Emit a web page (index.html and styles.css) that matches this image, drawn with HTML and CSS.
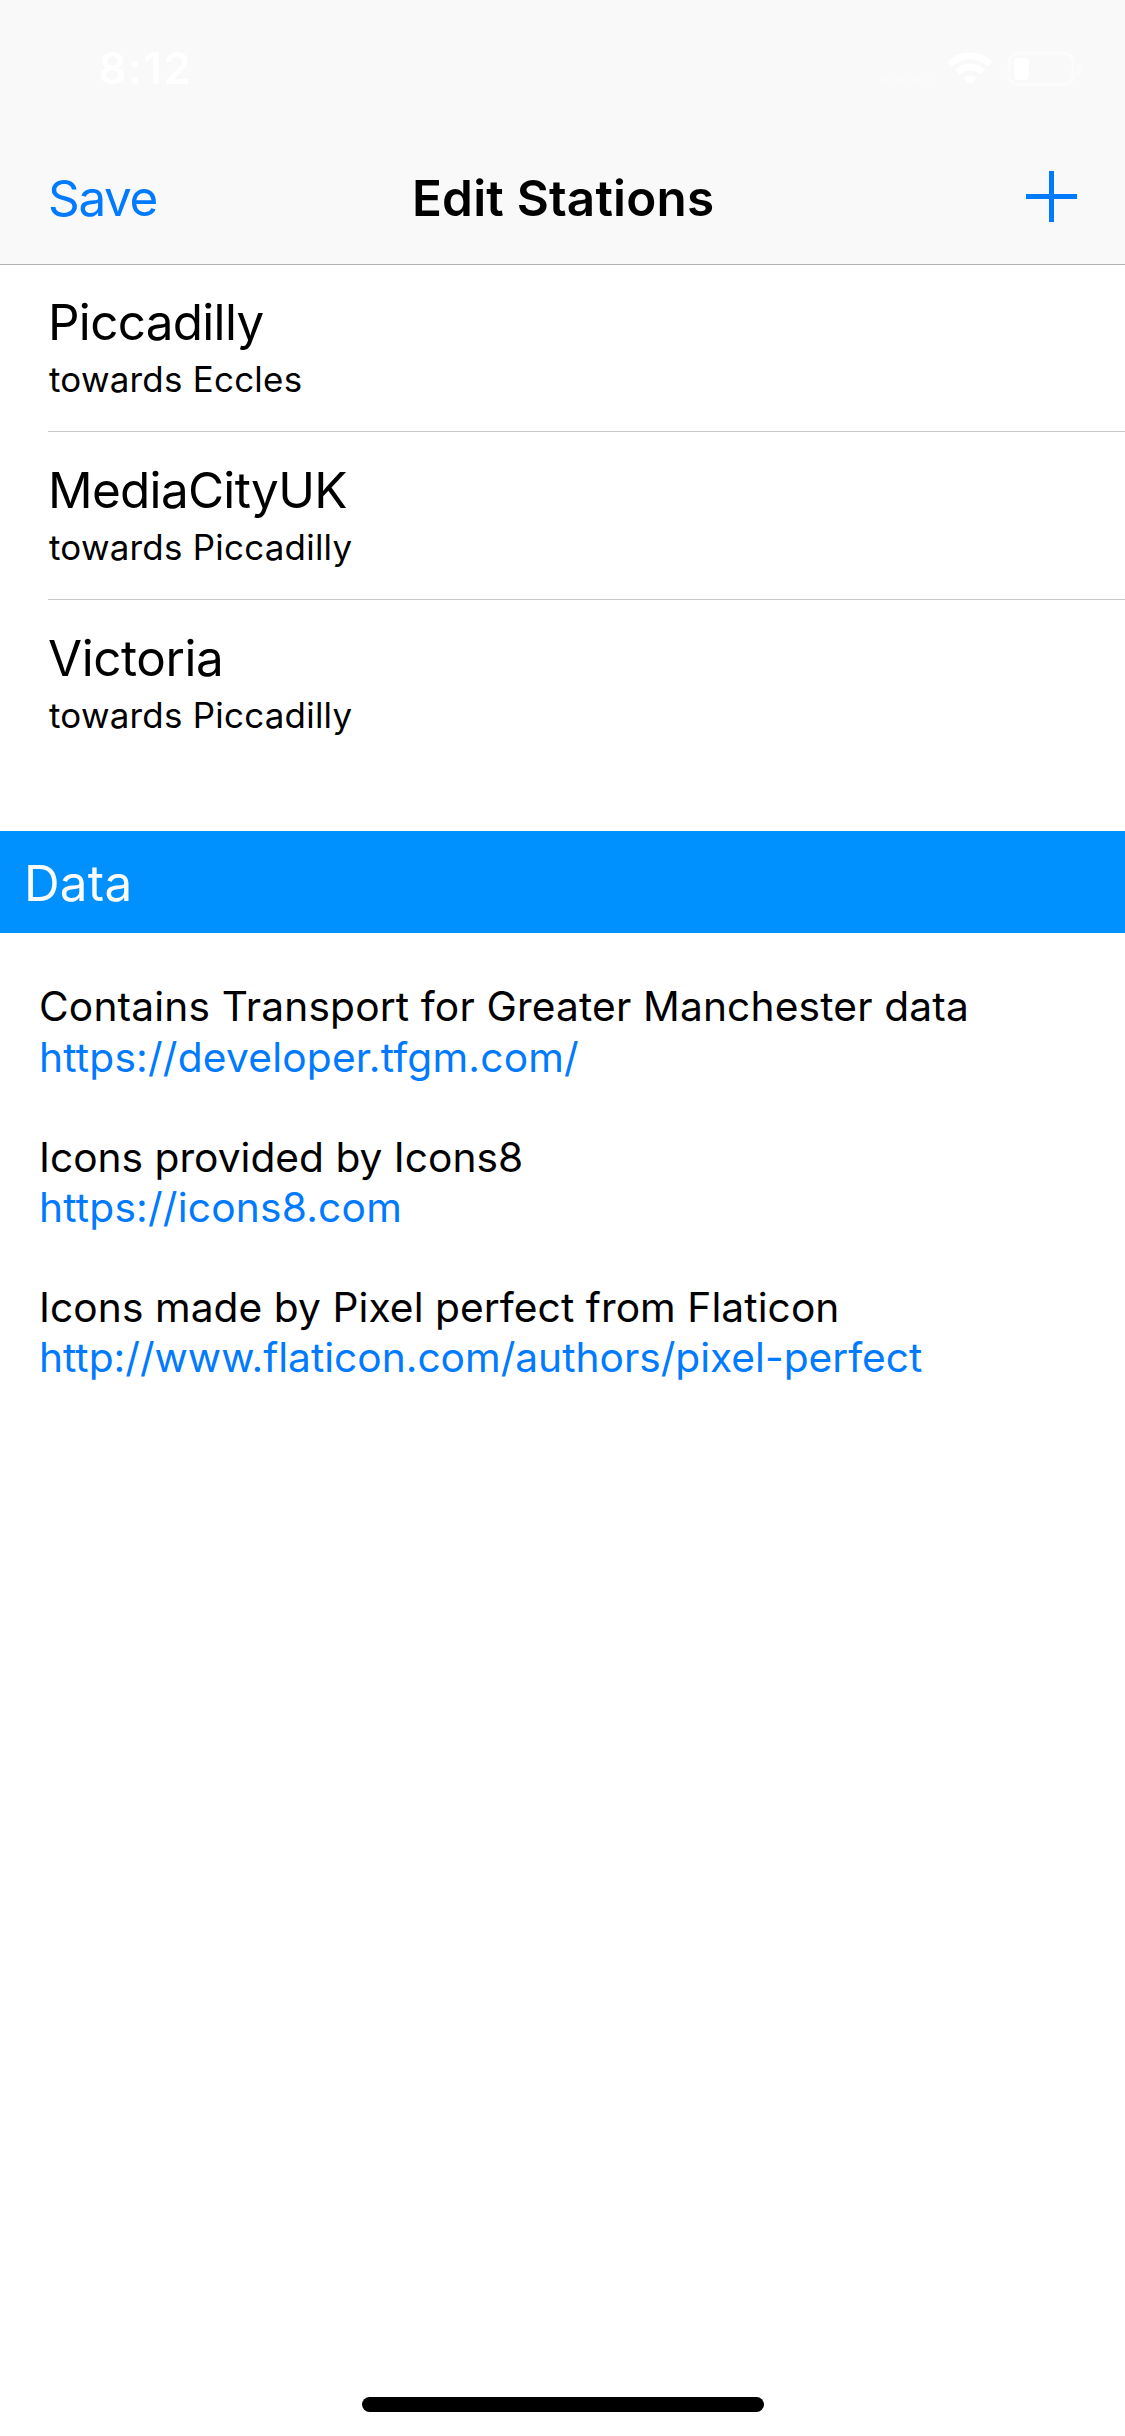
FILE: index.html
```html
<!DOCTYPE html>
<html lang="en">
<head>
<meta charset="utf-8">
<title>Edit Stations</title>
<link rel="stylesheet" href="styles.css">
</head>
<body>
<div class="screen">
  <header class="header">
    <div class="status-bar">
      <span class="time">8:12</span>
      <svg class="status-icons" width="202" height="36" viewBox="0 0 202 36" aria-hidden="true">
        <g fill="#fafafa">
          <circle cx="5" cy="29" r="4.8"/>
          <circle cx="19.3" cy="29" r="4.8"/>
          <circle cx="33.6" cy="29" r="4.8"/>
          <circle cx="47.9" cy="29" r="4.8"/>
        </g>
        <g fill="none" stroke="#fff" stroke-width="7">
          <path d="M69.85 13.35A28.5 28.5 0 0 1 110.15 13.35"/>
          <path d="M77.6 21.1A17.5 17.5 0 0 1 102.4 21.1"/>
        </g>
        <path fill="#fff" d="M83.6 27.1A9.2 9.2 0 0 1 96.4 27.1L90.8 32.9Q90 33.7 89.2 32.9Z"/>
        <rect x="129" y="2.5" width="64" height="31" rx="8.5" fill="none" stroke="#fcfcfc" stroke-width="3"/>
        <rect x="134" y="7" width="15" height="22" rx="4" fill="#fff"/>
        <path fill="#fcfcfc" d="M197 12Q201 14 201 18T197 24Z"/>
      </svg>
    </div>
    <nav class="nav-bar">
      <a class="save">Save</a>
      <h1 class="title">Edit Stations</h1>
      <svg class="add" width="51" height="51" viewBox="0 0 51 51" role="img" aria-label="Add">
        <path fill="#007aff" d="M23 0h5v23h23v5H28v23h-5V28H0v-5h23z"/>
      </svg>
    </nav>
  </header>
  <ul class="stations">
    <li class="station"><span class="name">Piccadilly</span><span class="direction">towards Eccles</span></li>
    <li class="station"><span class="name">MediaCityUK</span><span class="direction">towards Piccadilly</span></li>
    <li class="station"><span class="name victoria">Victoria</span><span class="direction">towards Piccadilly</span></li>
  </ul>
  <h2 class="section-header">Data</h2>
  <div class="credits">
    <div class="credit"><p class="source">Contains Transport for Greater Manchester data</p><a class="link">https://developer.tfgm.com/</a></div>
    <div class="credit"><p class="icons-text">Icons provided by Icons8</p><a class="link">https://icons8.com</a></div>
    <div class="credit"><p class="author-text">Icons made by Pixel perfect from Flaticon</p><a class="link author-link">http://www.flaticon.com/authors/pixel-perfect</a></div>
  </div>
  <div class="home-indicator"></div>
</div>
</body>
</html>
```
FILE: styles.css
```css
* { box-sizing: border-box; margin: 0; padding: 0; }

body {
  background: #fff;
  color: #000;
  font-family: Inter, "Liberation Sans", sans-serif;
}

.screen {
  width: 1125px;
  height: 2436px;
  display: flex;
  flex-direction: column;
  background: #fff;
}

.header {
  height: 264px;
  flex: none;
  background: #f9f9f9;
  box-shadow: 0 1px 0 #b2b2b2;
  position: relative;
}

.status-bar {
  height: 132px;
  padding: 39px 43px 0 98.5px;
  display: flex;
  justify-content: space-between;
  align-items: flex-start;
}

.time {
  font-size: 43.6px;
  font-weight: 600;
  line-height: 60px;
  letter-spacing: 1.6px;
  color: #fff;
}

.status-icons { margin-top: 12px; }

.nav-bar {
  height: 132px;
  padding: 0 48px;
  display: grid;
  grid-template-columns: 364px 1fr 51px;
  align-items: center;
  font-size: 49.4px;
  line-height: 60px;
}

.save { color: #007aff; letter-spacing: -1.3px; }

.title {
  font-size: inherit;
  font-weight: 600;
  letter-spacing: 0.22px;
}

.add { margin-top: -3px; }

.stations { list-style: none; padding-left: 48px; }

.station {
  height: 168px;
  padding-top: 28px;
  display: flex;
  flex-direction: column;
  border-bottom: 1px solid #c8c7cc;
}

.station:last-child { border-bottom: 0; }

.name {
  font-size: 49.4px;
  line-height: 60px;
  letter-spacing: -0.68px;
}

.victoria { letter-spacing: -0.41px; }

.direction {
  margin-top: 7px;
  padding-left: 1px;
  font-size: 34.9px;
  line-height: 40px;
  letter-spacing: 0.26px;
}

.section-header {
  height: 102px;
  flex: none;
  margin-top: 63px;
  padding: 22px 24px;
  background: #0091ff;
  color: #fafafa;
  font-size: 49.4px;
  font-weight: 400;
  line-height: 60px;
  letter-spacing: 0.21px;
}

.credits {
  padding: 49px 39px 0;
  display: flex;
  flex-direction: column;
  gap: 50px;
  font-size: 40.7px;
  line-height: 50px;
}

.credit { display: flex; flex-direction: column; align-items: flex-start; }
.source { margin-bottom: 1px; letter-spacing: 0.15px; }
.icons-text { letter-spacing: 0; }
.author-text { letter-spacing: 0.07px; }
.link { color: #007aff; letter-spacing: 0.2px; }
.author-link { letter-spacing: -0.01px; }

.home-indicator {
  width: 402px;
  height: 15px;
  margin: auto auto 24px 362px;
  border-radius: 7.5px;
  background: #000;
}
```
